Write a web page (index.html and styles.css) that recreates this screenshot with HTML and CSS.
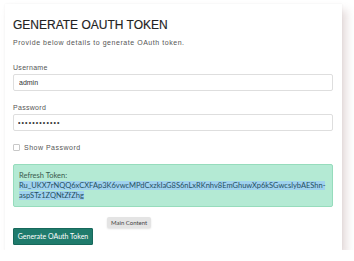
FILE: index.html
```html
<!DOCTYPE html>
<html>
<head>
<meta charset="utf-8">
<link rel="stylesheet" href="styles.css">
</head>
<body>
<div class="card">
  <h1 class="title">GENERATE OAUTH TOKEN</h1>
  <p class="subtitle">Provide below details to generate OAuth token.</p>
  <label class="label first">Username</label>
  <input class="field" type="text" value="admin">
  <label class="label">Password</label>
  <input class="field pass" type="password" value="adminpasswrd">
  <div class="check-row">
    <span class="box"></span>
    <span class="check-text">Show Password</span>
  </div>
  <div class="alert">
    <div class="alert-title">Refresh Token:</div>
    <div class="alert-token"><span class="sel">Ru_UKX7rNQQ6xCXFAp3K6vwcMPdCxzkIaG8S6nLxRKnhv8EmGhuwXp6kSGwcslybAEShn-aspSTz1ZQNtZfZhg</span></div>
  </div>
  <div class="actions">
    <button class="btn">Generate OAuth Token</button>
    <span class="tip">Main Content</span>
  </div>
</div>
</body>
</html>
```

FILE: styles.css
```css
html, body {
  margin: 0;
  background: #ffffff;
}
body {
  padding: 4px 0 0 5px;
}
.card {
  width: 337px;
  box-sizing: border-box;
  padding: 14px 9px 5px 8px;
  background: #fff;
  box-shadow: 5px 6px 8px rgba(140, 100, 100, 0.22), 0 0 2px rgba(0, 0, 0, 0.06);
  font-family: "Liberation Sans", Arial, sans-serif;
}
.title {
  margin: 0;
  font-size: 12px;
  line-height: 14px;
  font-weight: normal;
  color: #222;
  -webkit-text-stroke: 0.15px #222;
}
.subtitle {
  margin: 6px 0 0;
  font-size: 7px;
  line-height: 9px;
  letter-spacing: 0.55px;
  color: #555;
}
.label {
  display: block;
  margin-top: 12px;
  font-size: 7px;
  line-height: 9px;
  letter-spacing: 0.3px;
  color: #555;
}
.label.first {
  margin-top: 16px;
}
.field {
  display: block;
  box-sizing: border-box;
  width: 100%;
  height: 17px;
  margin: 2px 0 0;
  padding: 0 5px;
  border: 1px solid #dedede;
  border-radius: 2px;
  font-family: "Liberation Sans", Arial, sans-serif;
  font-size: 7px;
  color: #333;
  background: #fff;
  outline: none;
}
.field.pass {
  padding-left: 4px;
  letter-spacing: 1.1px;
}
.check-row {
  display: flex;
  align-items: center;
  gap: 4px;
  margin-top: 12px;
  height: 9px;
}
.box {
  width: 5px;
  height: 5px;
  border: 1px solid #c8c8c8;
  border-radius: 1px;
  background: #fff;
}
.check-text {
  font-size: 7px;
  line-height: 9px;
  letter-spacing: 0.5px;
  color: #555;
}
.alert {
  margin-top: 12px;
  padding: 5.5px 5px 5px 5px;
  background: #b4ead4;
  border: 1px solid #96dcbc;
  border-radius: 2px;
  font-family: Lato, "Liberation Sans", sans-serif;
  font-size: 7.5px;
  line-height: 10px;
  color: #3a5a4c;
}
.sel {
  background: #a0d2ee;
  color: #1f4f5e;
}
.actions {
  position: relative;
  margin-top: 21px;
}
.btn {
  display: block;
  width: 80px;
  height: 17px;
  padding: 0;
  border: 1px solid #17685b;
  border-radius: 1px;
  background: #1f7b6c;
  color: #fff;
  font-family: Lato, "Liberation Sans", sans-serif;
  font-size: 7px;
  line-height: 15px;
  text-align: center;
}
.tip {
  position: absolute;
  left: 94px;
  top: -11px;
  height: 11px;
  padding: 0 4px;
  background: #e4e4e4;
  border-radius: 2px;
  box-shadow: 0 1px 2px rgba(0, 0, 0, 0.12);
  font-family: Lato, "Liberation Sans", sans-serif;
  font-size: 6px;
  line-height: 11px;
  color: #444;
}
```
